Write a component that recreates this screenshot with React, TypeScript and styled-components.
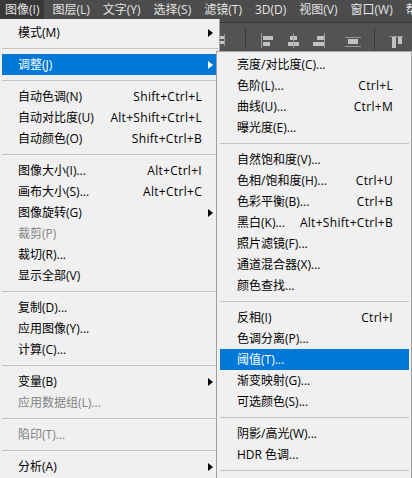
import React from 'react';
import styled, { createGlobalStyle } from 'styled-components';

const GlobalStyle = createGlobalStyle`
  html, body {
    margin: 0;
    padding: 0;
    width: 412px;
    height: 478px;
    overflow: hidden;
    background: #535353;
  }

  body {
    font-family: 'Open Sans', 'Noto Sans CJK SC', sans-serif;
    font-size: 12px;
  }
`;

type Entry =
  | { kind: 'sep' }
  | {
      kind: 'item';
      label: string;
      shortcut?: string;
      submenu?: boolean;
      disabled?: boolean;
      active?: boolean;
    };

const item = (label: string, extra: Partial<Omit<Extract<Entry, { kind: 'item' }>, 'kind' | 'label'>> = {}): Entry => ({
  kind: 'item',
  label,
  ...extra,
});
const sep: Entry = { kind: 'sep' };

const menuBarItems = ['图像(I)', '图层(L)', '文字(Y)', '选择(S)', '滤镜(T)', '3D(D)', '视图(V)', '窗口(W)', '帮助(H)'];

const imageMenu: Entry[] = [
  item('模式(M)', { submenu: true }),
  sep,
  item('调整(J)', { submenu: true, active: true }),
  sep,
  item('自动色调(N)', { shortcut: 'Shift+Ctrl+L' }),
  item('自动对比度(U)', { shortcut: 'Alt+Shift+Ctrl+L' }),
  item('自动颜色(O)', { shortcut: 'Shift+Ctrl+B' }),
  sep,
  item('图像大小(I)...', { shortcut: 'Alt+Ctrl+I' }),
  item('画布大小(S)...', { shortcut: 'Alt+Ctrl+C' }),
  item('图像旋转(G)', { submenu: true }),
  item('裁剪(P)', { disabled: true }),
  item('裁切(R)...'),
  item('显示全部(V)'),
  sep,
  item('复制(D)...'),
  item('应用图像(Y)...'),
  item('计算(C)...'),
  sep,
  item('变量(B)', { submenu: true }),
  item('应用数据组(L)...', { disabled: true }),
  sep,
  item('陷印(T)...', { disabled: true }),
  sep,
  item('分析(A)', { submenu: true }),
];

const adjustMenu: Entry[] = [
  item('亮度/对比度(C)...'),
  item('色阶(L)...', { shortcut: 'Ctrl+L' }),
  item('曲线(U)...', { shortcut: 'Ctrl+M' }),
  item('曝光度(E)...'),
  sep,
  item('自然饱和度(V)...'),
  item('色相/饱和度(H)...', { shortcut: 'Ctrl+U' }),
  item('色彩平衡(B)...', { shortcut: 'Ctrl+B' }),
  item('黑白(K)...', { shortcut: 'Alt+Shift+Ctrl+B' }),
  item('照片滤镜(F)...'),
  item('通道混合器(X)...'),
  item('颜色查找...'),
  sep,
  item('反相(I)', { shortcut: 'Ctrl+I' }),
  item('色调分离(P)...'),
  item('阈值(T)...', { active: true }),
  item('渐变映射(G)...'),
  item('可选颜色(S)...'),
  sep,
  item('阴影/高光(W)...'),
  item('HDR 色调...'),
  sep,
];

const Page = styled.div`
  position: relative;
  width: 412px;
  height: 478px;
  overflow: hidden;
  background: #535353;
`;

const MenuBar = styled.div`
  display: flex;
  align-items: flex-start;
  gap: 3px;
  height: 22px;
  background: #4c4c4c;
  border-bottom: 1px solid #3a3a3a;
  white-space: nowrap;
`;

const MenuBarItem = styled.div<{ $open?: boolean }>`
  position: relative;
  display: flex;
  align-items: center;
  height: 19px;
  padding: 1px 5px 0;
  box-sizing: border-box;
  color: #e2e2e2;
  background: ${(p) => (p.$open ? '#383838' : 'transparent')};
  line-height: 16px;
`;

const Toolbar = styled.div`
  display: flex;
  align-items: flex-start;
  height: 28px;
  padding-left: 210px;
  background: #535353;
`;

const ToolDivider = styled.div<{ $gap: number }>`
  width: 1px;
  height: 22px;
  margin-top: 5px;
  margin-left: ${(p) => p.$gap}px;
  background: #3a3a3a;
`;

const ToolIcon = styled.svg<{ $gap: number }>`
  flex: none;
  width: 16px;
  height: 16px;
  margin-top: 9px;
  margin-left: ${(p) => p.$gap}px;
`;

const Dropdown = styled.div`
  position: absolute;
  top: 100%;
  left: 0;
  z-index: 5;
  width: 220px;
  box-sizing: border-box;
  padding: 3px 1px 2px 0;
  background: #f0f0f0;
  border-right: 1px solid #a0a0a0;
`;

const SubPanel = styled.div`
  position: absolute;
  top: -3px;
  left: calc(100% - 2px);
  z-index: 6;
  width: 196px;
  box-sizing: border-box;
  padding: 2px 2px 2px 1px;
  background: #f0f0f0;
  border: 1px solid #a0a0a0;
`;

const Row = styled.div<{ $active?: boolean; $disabled?: boolean; $indent: number }>`
  position: relative;
  display: flex;
  align-items: center;
  height: 21px;
  margin: 0 0 0 2px;
  padding: 1px 16px 0 ${(p) => p.$indent}px;
  box-sizing: border-box;
  white-space: nowrap;
  line-height: 16px;
  color: ${(p) => (p.$active ? '#ffffff' : p.$disabled ? '#838383' : '#000000')};
  background: ${(p) => (p.$active ? '#0078d7' : 'transparent')};
`;

const Label = styled.span`
  flex: 1;
`;

const Shortcut = styled.span`
  margin-left: 12px;
  letter-spacing: 0.3px;
`;

const Arrow = styled.span<{ $light?: boolean }>`
  position: absolute;
  right: 5px;
  top: 50%;
  margin-top: -4px;
  width: 0;
  height: 0;
  border-top: 4px solid transparent;
  border-bottom: 4px solid transparent;
  border-left: 5px solid ${(p) => (p.$light ? '#ffffff' : '#000000')};
`;

const Separator = styled.div`
  display: flex;
  align-items: center;
  height: 11px;
  margin-left: 2px;

  &::after {
    content: '';
    flex: 1;
    height: 1px;
    background: #c3c3c3;
  }
`;

function MenuList({
  entries,
  indent,
  renderSub,
}: {
  entries: Entry[];
  indent: number;
  renderSub?: (label: string) => React.ReactNode;
}) {
  return (
    <>
      {entries.map((e, i) =>
        e.kind === 'sep' ? (
          <Separator key={i} />
        ) : (
          <Row key={i} $active={e.active} $disabled={e.disabled} $indent={indent}>
            <Label>{e.label}</Label>
            {e.shortcut && <Shortcut>{e.shortcut}</Shortcut>}
            {e.submenu && <Arrow $light={e.active} />}
            {e.active && e.submenu && renderSub?.(e.label)}
          </Row>
        ),
      )}
    </>
  );
}

const BAR = '#c2c2c2';
const LINE = '#9a9a9a';

function ToolbarIcons() {
  return (
    <Toolbar>
      <ToolIcon $gap={0} viewBox="0 0 16 16">
        <rect x="3" y="4" width="11" height="3" fill={BAR} />
        <rect x="5" y="9" width="9" height="3" fill={BAR} />
        <rect x="14" y="2" width="1" height="12" fill={LINE} />
      </ToolIcon>
      <ToolDivider $gap={19} />
      <ToolIcon $gap={13} viewBox="0 0 16 16">
        <rect x="2" y="1" width="1" height="15" fill={LINE} />
        <rect x="4" y="4" width="10" height="4" fill={BAR} />
        <rect x="4" y="10" width="7" height="4" fill={BAR} />
      </ToolIcon>
      <ToolIcon $gap={10} viewBox="0 0 16 16">
        <rect x="5" y="4" width="7" height="4" fill={BAR} />
        <rect x="3" y="10" width="11" height="4" fill={BAR} />
        <rect x="8" y="1" width="1" height="15" fill={LINE} />
      </ToolIcon>
      <ToolIcon $gap={9} viewBox="0 0 16 16">
        <rect x="7" y="4" width="7" height="4" fill={BAR} />
        <rect x="3" y="10" width="11" height="4" fill={BAR} />
        <rect x="14" y="1" width="1" height="15" fill={LINE} />
      </ToolIcon>
      <ToolIcon $gap={19} viewBox="0 0 16 16">
        <rect x="0" y="5" width="16" height="1" fill={LINE} />
        <rect x="3" y="7" width="10" height="5" fill={BAR} />
        <rect x="0" y="14" width="16" height="1" fill={LINE} />
      </ToolIcon>
      <ToolDivider $gap={13} />
      <ToolIcon $gap={13} viewBox="0 0 16 16">
        <rect x="1" y="4" width="14" height="1" fill={LINE} />
        <rect x="4" y="5" width="4" height="11" fill={BAR} />
        <rect x="10" y="5" width="4" height="7" fill={BAR} />
      </ToolIcon>
    </Toolbar>
  );
}

export default function App() {
  return (
    <>
      <GlobalStyle />
      <Page>
        <MenuBar>
          {menuBarItems.map((name, i) => (
            <MenuBarItem key={name} $open={i === 0}>
              {name}
              {i === 0 && (
                <Dropdown>
                  <MenuList
                    entries={imageMenu}
                    indent={16}
                    renderSub={() => (
                      <SubPanel>
                        <MenuList entries={adjustMenu} indent={17} />
                      </SubPanel>
                    )}
                  />
                </Dropdown>
              )}
            </MenuBarItem>
          ))}
        </MenuBar>
        <ToolbarIcons />
      </Page>
    </>
  );
}
